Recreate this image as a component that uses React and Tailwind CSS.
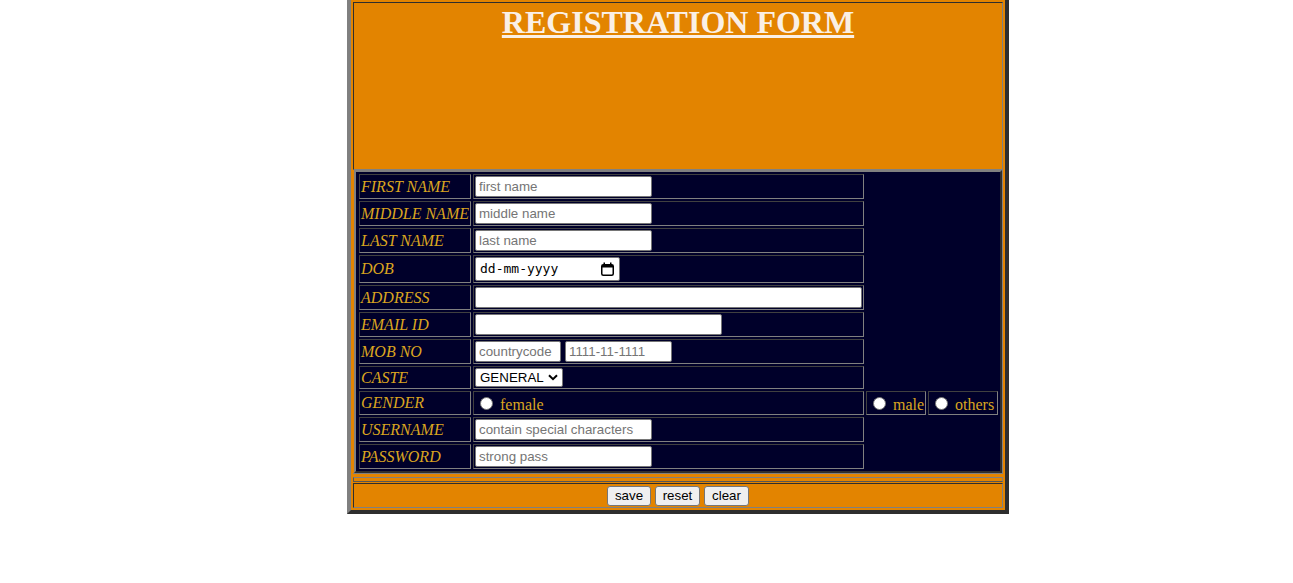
import React from "react";

const labelCls =
  "w-[112px] shrink-0 border border-t-[#404040] border-l-[#404040] border-r-[#808080] border-b-[#808080] pl-[1px] flex items-center whitespace-nowrap font-['Liberation_Serif','Times_New_Roman',serif] italic text-[16px] text-[#daa520] leading-[18px]";
const valueCls =
  "w-[391px] shrink-0 border border-t-[#404040] border-l-[#404040] border-r-[#808080] border-b-[#808080] pl-[1px] flex items-center";
const inputCls =
  "h-[21px] bg-white border border-[#767676] rounded-[2px] px-[3px] text-[13.333px] font-['Liberation_Sans',Arial,sans-serif] text-black placeholder:text-[#757575] outline-none";

function Row({ h, label, children, extra }) {
  return (
    <div className={`flex gap-[2px] ${h}`}>
      <div className={labelCls}>{label}</div>
      <div className={valueCls}>{children}</div>
      {extra}
    </div>
  );
}

function Radio({ text }) {
  return (
    <>
      <span className="ml-[5px] mr-[7px] w-[13px] h-[13px] shrink-0 rounded-full bg-white border border-[#767676]" />
      <span className="pt-[3px] font-['Liberation_Serif','Times_New_Roman',serif] text-[16px] leading-[18px] text-[#daa520] whitespace-nowrap">
        {text}
      </span>
    </>
  );
}

const radioCell =
  "shrink-0 border border-t-[#404040] border-l-[#404040] border-r-[#808080] border-b-[#808080] pl-[1px] flex items-center";

export default function App() {
  return (
    <div className="bg-white min-h-[583px]">
      <div className="ml-[347px] w-[662px] bg-[#e38400] border-l-4 border-r-4 border-b-4 border-l-[#808080] border-r-[#2e2e2e] border-b-[#2e2e2e] pt-[2px] px-[2px] pb-[2px] flex flex-col">
        {/* header */}
        <div className="h-[168px] border border-t-[#2e2e2e] border-l-[#2e2e2e] border-r-[#808080] border-b-[#808080] p-[1px]">
          <h1 className="text-center font-['Liberation_Serif','Times_New_Roman',serif] font-bold text-[32px] leading-[36px] text-[#faf0e6] underline">
            REGISTRATION FORM
          </h1>
        </div>

        {/* form */}
        <div className="pl-[1px] border-r border-b border-r-[#808080] border-b-[#808080]">
          <div className="w-[648px] bg-[#00002a] border-2 border-t-[#808080] border-l-[#808080] border-r-[#2e2e2e] border-b-[#2e2e2e] pt-[2px] pb-[2px] pl-[3px] flex flex-col gap-[2px]">
            <Row h="h-[25px]" label="FIRST NAME">
              <input className={`${inputCls} w-[177px]`} placeholder="first name" />
            </Row>
            <Row h="h-[25px]" label="MIDDLE NAME">
              <input className={`${inputCls} w-[177px]`} placeholder="middle name" />
            </Row>
            <Row h="h-[25px]" label="LAST NAME">
              <input className={`${inputCls} w-[177px]`} placeholder="last name" />
            </Row>
            <Row h="h-[28px]" label="DOB">
              <div className="w-[145px] h-[24px] bg-white border border-[#767676] rounded-[2px] pl-[4px] pr-[5px] flex items-center justify-between">
                <span className="font-['DejaVu_Sans_Mono',monospace] text-[13px] text-black">dd-mm-yyyy</span>
                <svg width="13" height="14" viewBox="0 0 13 14">
                  <rect x="0.75" y="2.75" width="11.5" height="10.5" rx="1.5" fill="none" stroke="black" strokeWidth="1.5" />
                  <rect x="1" y="3" width="11" height="2.5" fill="black" />
                  <rect x="2.5" y="0.5" width="1.5" height="3" fill="black" />
                  <rect x="9" y="0.5" width="1.5" height="3" fill="black" />
                </svg>
              </div>
            </Row>
            <Row h="h-[25px]" label="ADDRESS">
              <input className={`${inputCls} w-[387px]`} />
            </Row>
            <Row h="h-[25px]" label="EMAIL ID">
              <input className={`${inputCls} w-[247px]`} />
            </Row>
            <Row h="h-[25px]" label="MOB NO">
              <div className="flex gap-[4px]">
                <input className={`${inputCls} w-[86px]`} placeholder="countrycode" />
                <input className={`${inputCls} w-[107px]`} placeholder="1111-11-1111" />
              </div>
            </Row>
            <Row h="h-[23px]" label="CASTE">
              <div className="w-[88px] h-[19px] bg-white border border-[#767676] rounded-[2px] pl-[4px] pr-[4px] flex items-center justify-between">
                <span className="text-[13.333px] font-['Liberation_Sans',Arial,sans-serif] text-black">GENERAL</span>
                <svg width="10" height="7" viewBox="0 0 10 7">
                  <path d="M1 1.2 L5 5.2 L9 1.2" fill="none" stroke="black" strokeWidth="2" />
                </svg>
              </div>
            </Row>
            <Row
              h="h-[24px]"
              label="GENDER"
              extra={
                <>
                  <div className={`${radioCell} w-[60px]`}>
                    <Radio text="male" />
                  </div>
                  <div className={`${radioCell} w-[70px]`}>
                    <Radio text="others" />
                  </div>
                </>
              }
            >
              <Radio text="female" />
            </Row>
            <Row h="h-[25px]" label="USERNAME">
              <input className={`${inputCls} w-[177px]`} placeholder="contain special characters" />
            </Row>
            <Row h="h-[25px]" label="PASSWORD">
              <input className={`${inputCls} w-[177px]`} placeholder="strong pass" />
            </Row>
          </div>
        </div>

        {/* thin row */}
        <div className="mt-[3px] h-[5px] border-t border-b border-r border-t-[#808080] border-b-[#555555] border-r-[#808080] border-l border-l-[#555555]" />

        {/* buttons */}
        <div className="mt-[1px] h-[25px] border border-t-[#2e2e2e] border-l-[#2e2e2e] border-r-[#808080] border-b-[#808080] flex items-center justify-center gap-[4px]">
          {[
            ["save", "w-[44px]"],
            ["reset", "w-[45px]"],
            ["clear", "w-[45px]"],
          ].map(([t, w]) => (
            <button
              key={t}
              className={`${w} h-[20px] bg-[#efefef] border border-[#767676] rounded-[3px] text-[13.333px] font-['Liberation_Sans',Arial,sans-serif] text-black leading-none`}
            >
              {t}
            </button>
          ))}
        </div>
      </div>
    </div>
  );
}
